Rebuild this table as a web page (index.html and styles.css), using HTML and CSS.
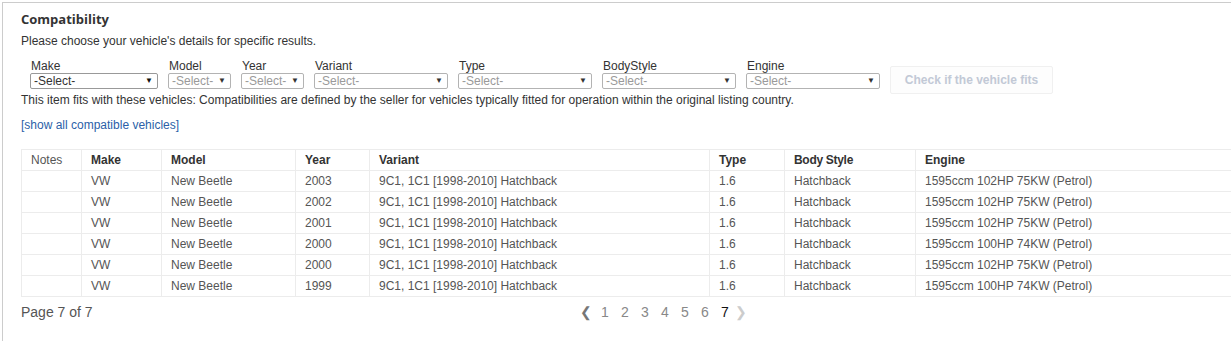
FILE: index.html
```html
<!DOCTYPE html>
<html>
<head>
<meta charset="utf-8">
<link rel="stylesheet" href="styles.css">
</head>
<body>
<div class="panel">
  <h2 class="title">Compatibility</h2>
  <p class="intro">Please choose your vehicle's details for specific results.</p>
  <div class="filters">
    <div class="field"><span class="lbl">Make</span><div class="sel w-make active"><span>-Select-</span><span class="arr">&#9660;</span></div></div>
    <div class="field"><span class="lbl">Model</span><div class="sel w-sm"><span>-Select-</span><span class="arr">&#9660;</span></div></div>
    <div class="field"><span class="lbl">Year</span><div class="sel w-sm"><span>-Select-</span><span class="arr">&#9660;</span></div></div>
    <div class="field"><span class="lbl">Variant</span><div class="sel w-lg"><span>-Select-</span><span class="arr">&#9660;</span></div></div>
    <div class="field"><span class="lbl">Type</span><div class="sel w-lg"><span>-Select-</span><span class="arr">&#9660;</span></div></div>
    <div class="field"><span class="lbl">BodyStyle</span><div class="sel w-lg"><span>-Select-</span><span class="arr">&#9660;</span></div></div>
    <div class="field"><span class="lbl">Engine</span><div class="sel w-lg"><span>-Select-</span><span class="arr">&#9660;</span></div></div>
    <button class="check" type="button">Check if the vehicle fits</button>
  </div>
  <p class="fits">This item fits with these vehicles: Compatibilities are defined by the seller for vehicles typically fitted for operation within the original listing country.</p>
  <a class="showall" href="#">[show all compatible vehicles]</a>
  <table class="grid">
    <thead>
      <tr><th class="c-notes notes">Notes</th><th class="c-make">Make</th><th class="c-model">Model</th><th class="c-year">Year</th><th class="c-var">Variant</th><th class="c-type">Type</th><th class="c-body">Body Style</th><th class="c-eng">Engine</th></tr>
    </thead>
    <tbody>
      <tr><td></td><td>VW</td><td>New Beetle</td><td>2003</td><td>9C1, 1C1 [1998-2010] Hatchback</td><td>1.6</td><td>Hatchback</td><td>1595ccm 102HP 75KW (Petrol)</td></tr>
      <tr><td></td><td>VW</td><td>New Beetle</td><td>2002</td><td>9C1, 1C1 [1998-2010] Hatchback</td><td>1.6</td><td>Hatchback</td><td>1595ccm 102HP 75KW (Petrol)</td></tr>
      <tr><td></td><td>VW</td><td>New Beetle</td><td>2001</td><td>9C1, 1C1 [1998-2010] Hatchback</td><td>1.6</td><td>Hatchback</td><td>1595ccm 102HP 75KW (Petrol)</td></tr>
      <tr><td></td><td>VW</td><td>New Beetle</td><td>2000</td><td>9C1, 1C1 [1998-2010] Hatchback</td><td>1.6</td><td>Hatchback</td><td>1595ccm 100HP 74KW (Petrol)</td></tr>
      <tr><td></td><td>VW</td><td>New Beetle</td><td>2000</td><td>9C1, 1C1 [1998-2010] Hatchback</td><td>1.6</td><td>Hatchback</td><td>1595ccm 102HP 75KW (Petrol)</td></tr>
      <tr><td></td><td>VW</td><td>New Beetle</td><td>1999</td><td>9C1, 1C1 [1998-2010] Hatchback</td><td>1.6</td><td>Hatchback</td><td>1595ccm 100HP 74KW (Petrol)</td></tr>
    </tbody>
  </table>
  <div class="pager">
    <span class="pageinfo">Page 7 of 7</span>
    <div class="pages">
      <span class="chev prev">&#10094;</span>
      <span class="pg">1</span><span class="pg">2</span><span class="pg">3</span><span class="pg">4</span><span class="pg">5</span><span class="pg">6</span><span class="pg cur">7</span>
      <span class="chev next">&#10095;</span>
    </div>
  </div>
</div>
</body>
</html>
```

FILE: styles.css
```css
html, body {
  margin: 0;
  padding: 0;
  background: #fff;
  overflow: hidden;
}
body {
  font-family: "Liberation Sans", Arial, sans-serif;
  font-size: 12px;
  color: #333;
}
.panel {
  margin: 2px 0 0 2px;
  border-top: 1px solid #cccccc;
  border-left: 1px solid #cccccc;
  padding: 7px 0 20px 18px;
  width: 1300px;
}
.title {
  margin: 0;
  font-family: "Open Sans", sans-serif;
  font-weight: 700;
  font-size: 13px;
  line-height: 18px;
  color: #333;
}
.intro {
  margin: 6px 0 0 0;
  line-height: 14px;
}
.filters {
  display: flex;
  align-items: flex-start;
  gap: 10px;
  margin: 12px 0 0 9px;
}
.field {
  display: flex;
  flex-direction: column;
}
.lbl {
  line-height: 13px;
  padding-left: 1px;
  color: #333;
}
.sel {
  box-sizing: border-box;
  height: 16px;
  border: 1px solid #b3b3b3;
  border-radius: 2px;
  display: flex;
  align-items: center;
  justify-content: space-between;
  padding: 0 4px 0 3px;
  color: #9a9a9a;
  line-height: 14px;
  background: #fff;
}
.sel.active {
  color: #333;
  border-color: #999;
}
.arr {
  font-size: 8px;
  color: #333;
}
.sel.active .arr {
  color: #111;
}
.w-make { width: 128px; }
.w-sm { width: 63px; }
.w-lg { width: 134px; }
.check {
  box-sizing: border-box;
  width: 163px;
  height: 28px;
  margin-top: 6px;
  margin-bottom: -5px;
  border: 1px solid #f0f0f0;
  border-radius: 2px;
  background: #fdfdfd;
  font-family: "Liberation Sans", Arial, sans-serif;
  font-weight: 700;
  font-size: 12px;
  color: #c2c9d6;
  padding: 0;
}
.fits {
  margin: 4px 0 0 0;
  line-height: 14px;
}
.showall {
  display: block;
  margin-top: 11px;
  line-height: 14px;
  color: #2b5fa8;
  text-decoration: none;
}
.grid {
  margin-top: 17px;
  border-collapse: collapse;
  width: 1290px;
  table-layout: fixed;
}
.grid th, .grid td {
  border: 1px solid #ececec;
  height: 20px;
  padding: 0 0 0 9px;
  text-align: left;
  font-size: 12px;
  line-height: 14px;
  color: #555;
  white-space: nowrap;
}
.grid th {
  font-weight: 700;
  color: #333;
}
.grid th.notes {
  font-weight: 400;
  color: #555;
}
.c-notes { width: 50px; }
.c-make { width: 70px; }
.c-model { width: 124px; }
.c-year { width: 64px; }
.c-var { width: 330px; }
.c-type { width: 65px; }
.c-body { width: 121px; }
.c-eng { width: auto; }
.grid th.c-body { letter-spacing: -0.3px; }
.pager {
  display: flex;
  align-items: center;
  margin-top: 6px;
  font-size: 14px;
  line-height: 18px;
}
.pageinfo {
  color: #555;
  width: 556px;
}
.pages {
  display: flex;
  align-items: center;
}
.pg {
  width: 20px;
  text-align: center;
  color: #888;
}
.pg.cur { color: #111; }
.chev {
  font-size: 14px;
  color: #777;
  width: 18px;
  text-align: center;
}
.chev.next { color: #ccc; margin-left: -3px; }
```
